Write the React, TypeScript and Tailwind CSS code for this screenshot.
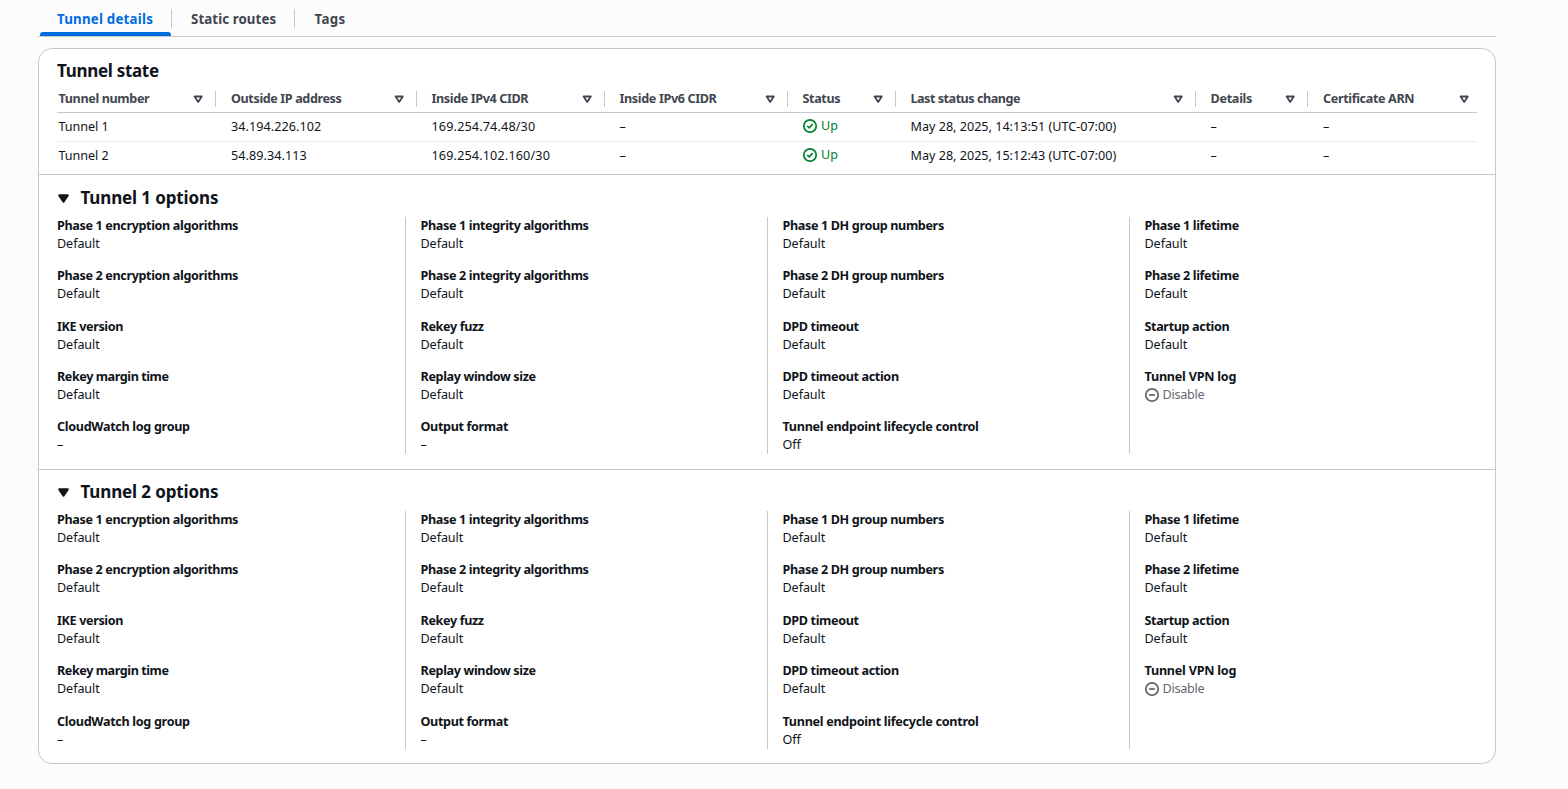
import clsx from "clsx";

const columns = [
  { label: "Tunnel number", width: "w-[159px] pl-[1.5px]", tracking: "tracking-[-0.36px]" },
  { label: "Outside IP address", width: "w-[201px] pl-[15px]", tracking: "tracking-[-0.39px]" },
  { label: "Inside IPv4 CIDR", width: "w-[188px] pl-[14.5px]", tracking: "tracking-[-0.38px]" },
  { label: "Inside IPv6 CIDR", width: "w-[183px] pl-[14.5px]", tracking: "tracking-[-0.36px]" },
  { label: "Status", width: "w-[108px] pl-[14.5px]", tracking: "tracking-[-0.36px]" },
  { label: "Last status change", width: "w-[300px] pl-[14.5px]", tracking: "tracking-[-0.48px]" },
  { label: "Details", width: "w-[112px] pl-[14.5px]", tracking: "tracking-[-0.28px]" },
  { label: "Certificate ARN", width: "w-[169px] pl-[15px]", tracking: "tracking-[-0.36px]" },
];

const rows = [
  ["Tunnel 1", "34.194.226.102", "169.254.74.48/30", "–", "Up", "May 28, 2025, 14:13:51 (UTC-07:00)", "–", "–"],
  ["Tunnel 2", "54.89.34.113", "169.254.102.160/30", "–", "Up", "May 28, 2025, 15:12:43 (UTC-07:00)", "–", "–"],
];

const cellTracking = [
  "tracking-[-0.05px]",
  "tracking-[0.06px]",
  "tracking-[0.16px]",
  "tracking-normal",
  "tracking-normal",
  "tracking-normal",
  "tracking-normal",
  "tracking-normal",
];

const optionColumns: [string, string][][] = [
  [
    ["Phase 1 encryption algorithms", "Default"],
    ["Phase 2 encryption algorithms", "Default"],
    ["IKE version", "Default"],
    ["Rekey margin time", "Default"],
    ["CloudWatch log group", "–"],
  ],
  [
    ["Phase 1 integrity algorithms", "Default"],
    ["Phase 2 integrity algorithms", "Default"],
    ["Rekey fuzz", "Default"],
    ["Replay window size", "Default"],
    ["Output format", "–"],
  ],
  [
    ["Phase 1 DH group numbers", "Default"],
    ["Phase 2 DH group numbers", "Default"],
    ["DPD timeout", "Default"],
    ["DPD timeout action", "Default"],
    ["Tunnel endpoint lifecycle control", "Off"],
  ],
  [
    ["Phase 1 lifetime", "Default"],
    ["Phase 2 lifetime", "Default"],
    ["Startup action", "Default"],
    ["Tunnel VPN log", "Disable"],
  ],
];

const labelTracking: Record<string, string> = {
  "Tunnel endpoint lifecycle control": "tracking-[-0.29px]",
  "Tunnel VPN log": "tracking-[-0.22px]",
  "CloudWatch log group": "tracking-[-0.31px]",
  "Rekey margin time": "tracking-[-0.43px]",
};

function SortIcon() {
  return (
    <svg viewBox="0 0 16 16" className="mt-px size-[14.4px] shrink-0" fill="none" stroke="currentColor" strokeWidth="2" strokeLinejoin="round">
      <path d="M4 5h8l-4 6-4-6z" />
    </svg>
  );
}

function CaretIcon() {
  return (
    <svg viewBox="0 0 16 16" className="size-[17px] shrink-0" fill="currentColor" stroke="currentColor" strokeWidth="2" strokeLinejoin="round">
      <path d="M4 5h8l-4 6-4-6z" />
    </svg>
  );
}

function SuccessIcon() {
  return (
    <svg viewBox="0 0 16 16" className="size-[16px] shrink-0" fill="none" stroke="currentColor" strokeWidth="1.7">
      <circle cx="8" cy="8" r="6.2" />
      <path d="m5.2 8 2 1.9 3.4-3.8" />
    </svg>
  );
}

function StoppedIcon() {
  return (
    <svg viewBox="0 0 16 16" className="size-[16px] shrink-0" fill="none" stroke="currentColor" strokeWidth="1.8">
      <circle cx="8" cy="8" r="6.2" />
      <path d="M10.8 8H5.2" />
    </svg>
  );
}

function Tabs() {
  return (
    <div className="flex h-[37px] items-start border-b border-[#c6c6cd] pl-0.5 text-[13.3px] leading-[20px] font-bold text-[#424650]">
      <div className="flex h-[36px] w-[131px] flex-col justify-between">
        <div className="mt-[9px] h-[20px] pl-[17px] tracking-[0.22px] text-[#006ce0]">Tunnel details</div>
        <div className="h-1 rounded-t-[3px] bg-[#006ce0]" />
      </div>
      <div className="mt-[9px] h-[19px] w-[123px] border-l border-[#c6c6cd] pl-[19px] tracking-[0.08px]">Static routes</div>
      <div className="mt-[9px] h-[19px] border-l border-[#c6c6cd] pl-[19.5px] tracking-[0.3px]">Tags</div>
    </div>
  );
}

function StateTable() {
  return (
    <section className="h-[126px] border-b border-[#c6c6cd] px-[18px] pt-[11px]">
      <h2 className="h-[25px] text-[17px] leading-[22px] font-bold tracking-[-0.3px]">Tunnel state</h2>
      <div className="flex h-[28px] items-center border-b border-[#c6c6cd] text-[#424650]">
        {columns.map((col, i) => (
          <div
            key={col.label}
            className={clsx(
              "flex h-4 shrink-0 items-center justify-between font-bold",
              col.width,
              i < columns.length - 1 ? "border-r border-[#c6c6cd] pr-[10px]" : "pr-[6px]",
            )}
          >
            <span className={col.tracking}>{col.label}</span>
            <SortIcon />
          </div>
        ))}
      </div>
      {rows.map((row, r) => (
        <div key={row[0]} className={clsx("flex items-center", r === 0 ? "h-[29px] border-b border-[#ebebf0]" : "h-[28px]")}>
          {row.map((value, i) => (
            <div key={i} className={clsx("shrink-0 whitespace-nowrap", columns[i].width, cellTracking[i])}>
              {value === "Up" ? (
                <span className="-mt-0.5 -ml-[0.5px] flex items-center gap-[3px] text-[#00802f]">
                  <SuccessIcon />
                  {value}
                </span>
              ) : (
                value
              )}
            </div>
          ))}
        </div>
      ))}
    </section>
  );
}

function TunnelOptions({ title, last }: { title: string; last?: boolean }) {
  return (
    <section className={clsx(last ? "pt-[11px]" : "h-[295px] border-b border-[#c6c6cd] pt-[12px]")}>
      <h2 className="flex h-[30px] items-start gap-[8.5px] pl-[16px] text-[17px] leading-[22px] font-bold">
        <span className="flex h-[23px] items-center">
          <CaretIcon />
        </span>
        <span className="tracking-[-0.13px]">{title}</span>
      </h2>
      <div className="flex">
        {optionColumns.map((items, c) => (
          <dl
            key={c}
            className={clsx(
              "flex flex-col",
              last ? "h-[238px] gap-[14.4px]" : "h-[237px] gap-[14.3px]",
              c === 0 ? "w-[366px] pl-[18px]" : "w-[362px] border-l border-[#c6c6cd] pl-[14.5px]",
            )}
          >
            {items.map(([label, value]) => (
              <div key={label} className="leading-[18px]">
                <dt className={clsx("font-bold", labelTracking[label] ?? "tracking-[-0.36px]")}>{label}</dt>
                <dd>
                  {value === "Disable" ? (
                    <span className="-ml-[0.5px] flex items-center gap-[2.5px] tracking-[-0.25px] text-[#656871]">
                      <StoppedIcon />
                      {value}
                    </span>
                  ) : (
                    <span className="tracking-[-0.08px]">{value}</span>
                  )}
                </dd>
              </div>
            ))}
          </dl>
        ))}
      </div>
    </section>
  );
}

export default function App() {
  return (
    <div className="h-[789px] w-full bg-[#fcfcfd] pl-[38px] font-['Noto_Sans','Open_Sans',sans-serif] text-[12.6px] leading-[18px] text-[#0f141a]">
      <div className="w-[1458px]">
        <Tabs />
        <main className="mt-[11px] h-[716px] overflow-hidden rounded-[14px] border border-[#c6c6cd] bg-white">
          <StateTable />
          <TunnelOptions title="Tunnel 1 options" />
          <TunnelOptions title="Tunnel 2 options" last />
        </main>
      </div>
    </div>
  );
}
